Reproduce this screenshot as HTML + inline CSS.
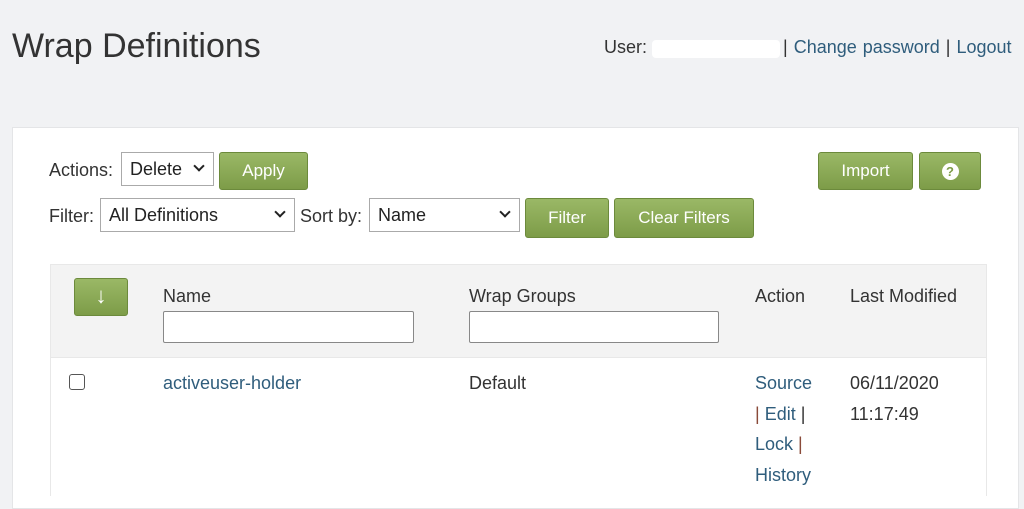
<!DOCTYPE html>
<html><head><style>
body{margin:0;width:1024px;height:495px;background:#f1f2f4;font-family:"Liberation Sans",sans-serif;color:#333;position:relative;overflow:hidden}
.a{position:absolute;white-space:nowrap}
.panel{position:absolute;left:12px;top:127px;width:1005px;height:380px;background:#fff;border:1px solid #e4e5e7}
.btn{position:absolute;background:linear-gradient(#9ab866,#7d9c48);border:1px solid #6c8a3c;border-radius:3px;color:#fff;font-size:17px;text-align:center;box-sizing:border-box}
.sel{position:absolute;background:#fff;border:1px solid #aaa;box-sizing:border-box;font-size:18px;color:#222;padding-left:8px}
.sel:after{content:"";position:absolute;right:10px;top:9px;width:6px;height:6px;border-right:2px solid #222;border-bottom:2px solid #222;transform:rotate(45deg)}
.inp{position:absolute;background:#fff;border:1px solid #888;border-radius:2px;box-sizing:border-box}
.lnk{color:#2f5d7c}
.f{font-size:18px}
</style></head><body>
<div class="a" style="left:12px;top:27px;font-size:34px;color:#333">Wrap Definitions</div>
<div class="a f" style="left:604px;top:37px;color:#333">User:</div>
<div class="a" style="left:652px;top:40px;width:128px;height:18px;background:#fff;border-radius:4px"></div>
<div class="a f" style="left:783px;top:37px;word-spacing:1px"><span>|</span> <span class="lnk">Change password</span> | <span class="lnk">Logout</span></div>
<div class="panel"></div>
<div class="a f" style="left:49px;top:160px">Actions:</div>
<div class="sel" style="left:121px;top:152px;width:93px;height:34px;line-height:32px">Delete</div>
<div class="btn" style="left:219px;top:152px;width:89px;height:38px;line-height:36px">Apply</div>
<div class="btn" style="left:818px;top:152px;width:95px;height:38px;line-height:36px">Import</div>
<div class="btn" style="left:919px;top:152px;width:62px;height:38px;line-height:36px"><span style="display:inline-block;width:17px;height:17px;border-radius:50%;background:#fff;color:#7d9c48;font-weight:bold;font-size:13px;line-height:17px;vertical-align:middle">?</span></div>
<div class="a f" style="left:49px;top:206px">Filter:</div>
<div class="sel" style="left:100px;top:198px;width:195px;height:34px;line-height:32px">All Definitions</div>
<div class="a f" style="left:300px;top:206px">Sort by:</div>
<div class="sel" style="left:369px;top:198px;width:151px;height:34px;line-height:32px">Name</div>
<div class="btn" style="left:525px;top:198px;width:84px;height:40px;line-height:38px">Filter</div>
<div class="btn" style="left:614px;top:198px;width:140px;height:40px;line-height:38px">Clear Filters</div>
<div class="a" style="left:50px;top:264px;width:935px;height:92px;background:#f3f3f3;border:1px solid #e8e8e8"></div>
<div class="a" style="left:50px;top:356px;width:935px;height:140px;border-left:1px solid #e8e8e8;border-right:1px solid #e8e8e8"></div>
<div class="btn" style="left:74px;top:278px;width:54px;height:38px;line-height:34px;font-size:22px">↓</div>
<div class="a f" style="left:163px;top:286px">Name</div>
<div class="inp" style="left:163px;top:311px;width:251px;height:32px"></div>
<div class="a f" style="left:469px;top:286px">Wrap Groups</div>
<div class="inp" style="left:469px;top:311px;width:250px;height:32px"></div>
<div class="a f" style="left:755px;top:286px">Action</div>
<div class="a f" style="left:850px;top:286px">Last Modified</div>
<div class="a" style="left:69px;top:374px;width:16px;height:16px;border:1px solid #555;border-radius:3px;box-sizing:border-box"></div>
<div class="a f lnk" style="left:163px;top:373px">activeuser-holder</div>
<div class="a f" style="left:469px;top:373px">Default</div>
<div class="a f" style="left:755px;top:368px;line-height:30.5px" ><span class="lnk">Source</span><br><span style="color:#8a4a3a">|</span> <span class="lnk">Edit</span> <span style="color:#333">|</span><br><span class="lnk">Lock</span> <span style="color:#8a4a3a">|</span><br><span class="lnk">History</span></div>
<div class="a f" style="left:850px;top:368px;line-height:30.5px">06/11/2020<br>11:17:49</div>
</body></html>
